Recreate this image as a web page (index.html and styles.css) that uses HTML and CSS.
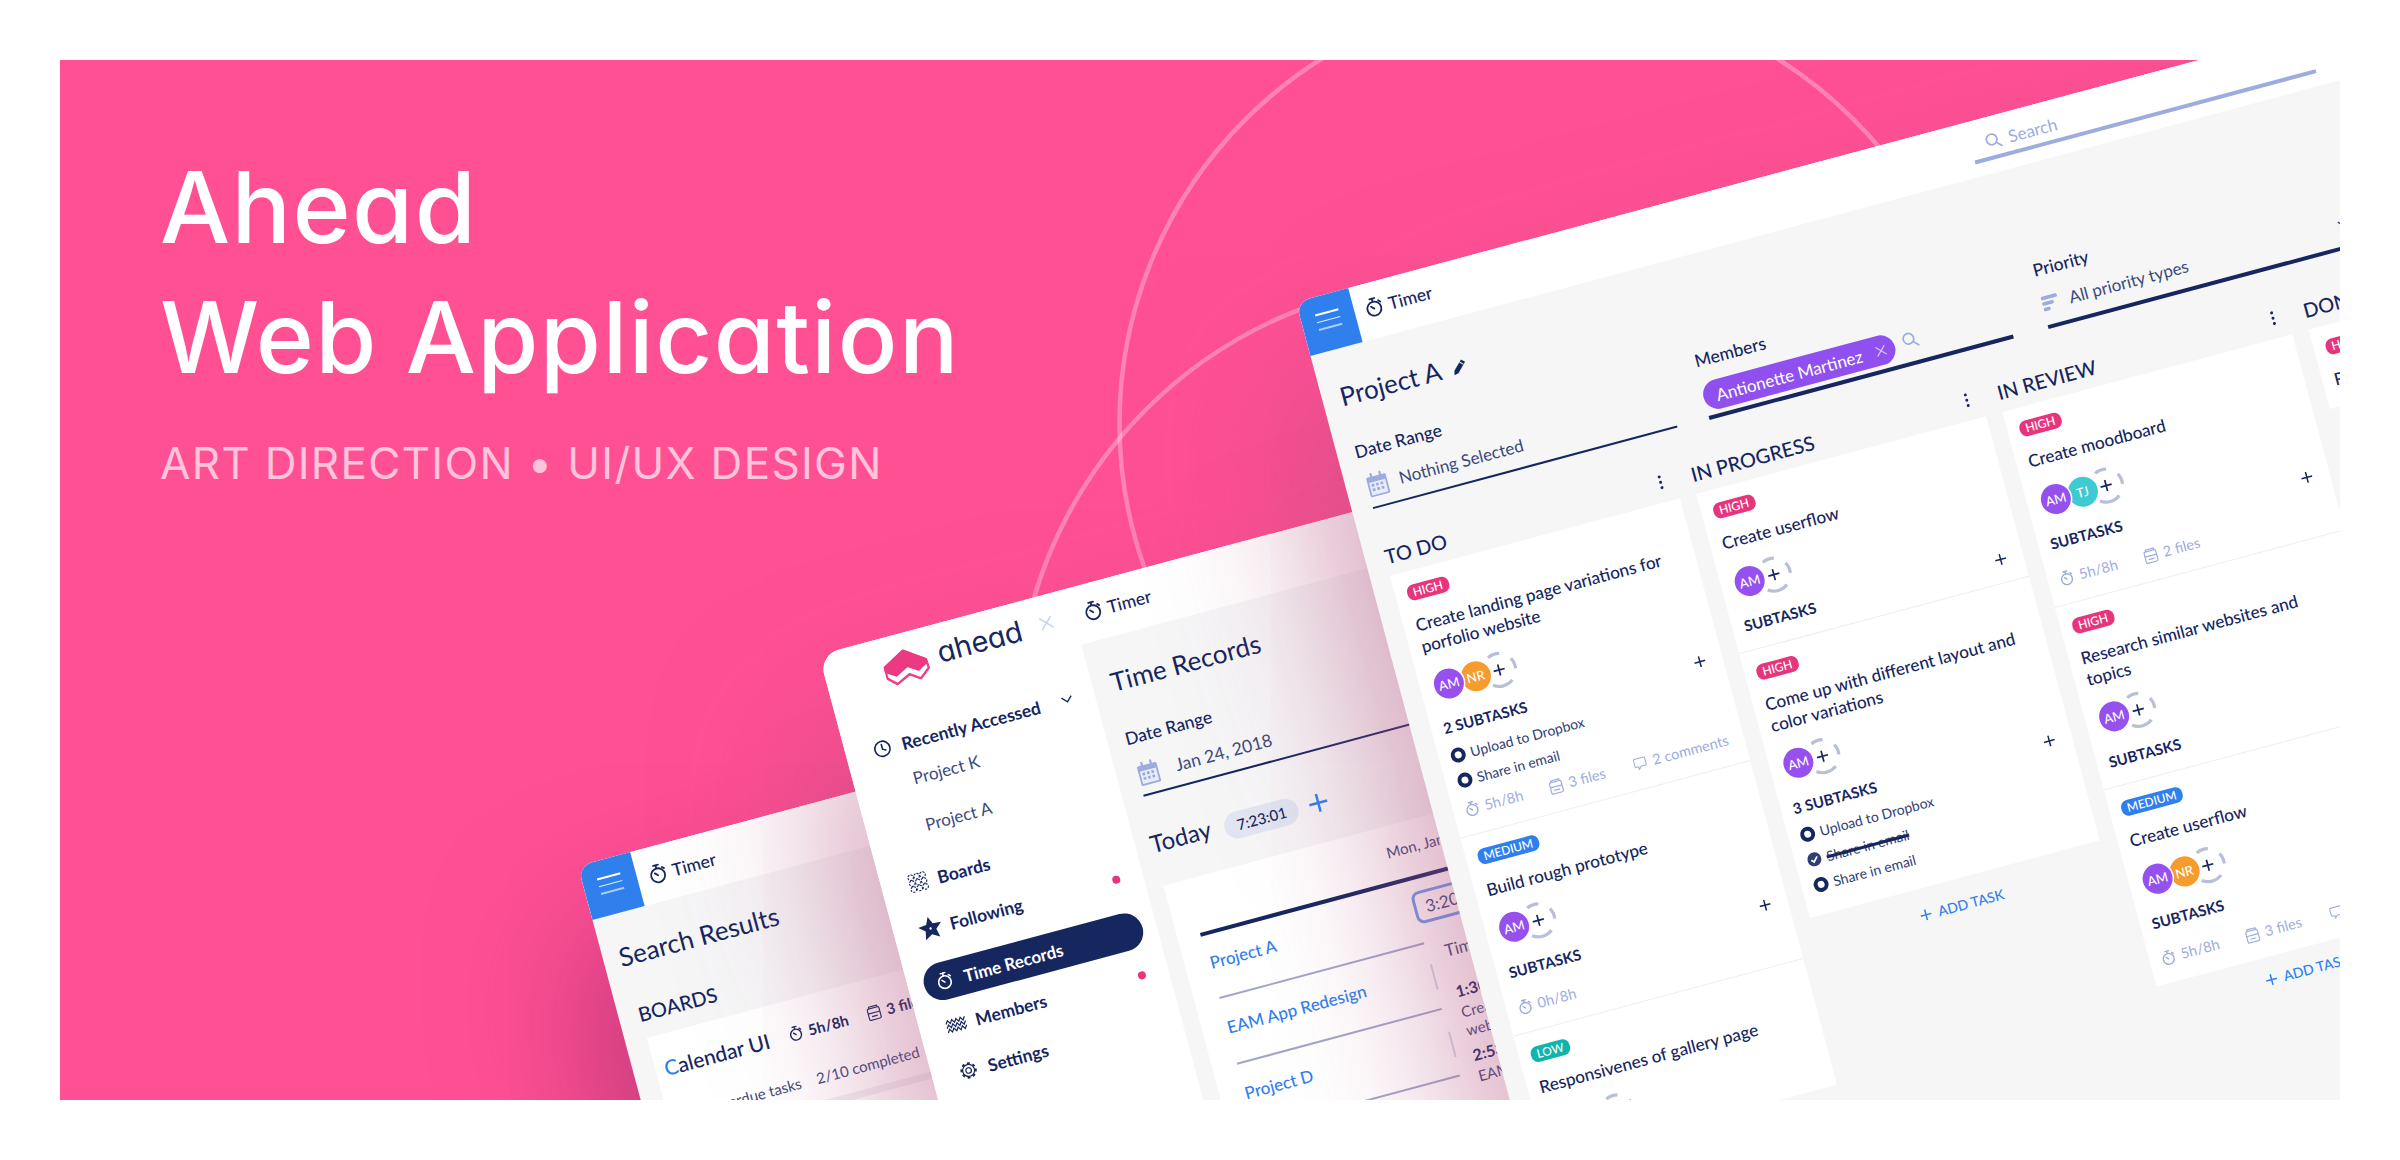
FILE: index.html
```html
<!DOCTYPE html>
<html lang="en">
<head>
<meta charset="utf-8">
<title>Ahead Web Application</title>
<link rel="stylesheet" href="styles.css">
</head>
<body>
<svg class="sprite" width="0" height="0" aria-hidden="true">
  <symbol id="i-timer" viewBox="0 0 18 20"><g fill="none" stroke="currentColor" stroke-width="1.800" stroke-linecap="round"><circle cx="9" cy="11.700" r="7"/><path d="M6.500 1.400h5M9 1.400v3M14.800 4.600l1.700 1.700M9 11.700L6.300 9"/></g></symbol>
  <symbol id="i-search" viewBox="0 0 16 16"><g fill="none" stroke="currentColor" stroke-width="1.6" stroke-linecap="round"><circle cx="6.6" cy="6.6" r="5"/><path d="M10.4 10.4l4.2 4.2"/></g></symbol>
  <symbol id="i-files" viewBox="0 0 14 16"><g fill="none" stroke="currentColor" stroke-width="1.2" stroke-linejoin="round"><path d="M3 3.4V1.6h8.4v1.8"/><rect x="1" y="3.4" width="12" height="11.6" rx="1.4"/><path d="M1 8.2h12M4 11.6h6"/></g></symbol>
  <symbol id="i-comment" viewBox="0 0 16 16"><path d="M2.4 1.6h11.2a1 1 0 0 1 1 1v7.4a1 1 0 0 1-1 1H8.4l-3 3.2V11H2.4a1 1 0 0 1-1-1V2.6a1 1 0 0 1 1-1z" fill="none" stroke="currentColor" stroke-width="1.2" stroke-linejoin="round"/></symbol>
  <symbol id="i-cal" viewBox="0 0 24 26"><path d="M2.5 4h19A1.5 1.5 0 0 1 23 5.5v19a1.5 1.5 0 0 1-1.500 1.500h-19A1.500 1.500 0 0 1 1 24.500v-19A1.500 1.500 0 0 1 2.500 4z" fill="#9dacdf"/><rect x="3" y="10" width="18" height="14" fill="#e9edf9"/><path d="M7 1v6M17 1v6" stroke="#9dacdf" stroke-width="2.4" stroke-linecap="round"/><g fill="#9dacdf"><rect x="5" y="12" width="3" height="3"/><rect x="10" y="12" width="3" height="3"/><rect x="15" y="12" width="3" height="3"/><rect x="5" y="17" width="3" height="3"/><rect x="10" y="17" width="3" height="3"/><rect x="15" y="17" width="3" height="3"/></g></symbol>
  <symbol id="i-filter" viewBox="0 0 18 18"><g stroke="#9dacdf" stroke-width="3.8" stroke-linecap="round"><path d="M2 3h14M2 9h9M2 15h4"/></g></symbol>
  <symbol id="i-pencil" viewBox="0 0 16 16"><path d="M11.500 1.200l3.300 3.300-9.300 9.300-4.300 1 1-4.300z" fill="currentColor"/><path d="M9.400 3.300l3.300 3.300" stroke="#f6f6f7" stroke-width="1"/></symbol>
  <symbol id="i-clock" viewBox="0 0 18 18"><g fill="none" stroke="currentColor" stroke-width="1.600" stroke-linecap="round"><circle cx="9" cy="9" r="7.600"/><path d="M9 4.600V9.400l3 1.600"/></g></symbol>
  <symbol id="i-star" viewBox="0 0 20 20"><path d="M10 .2l2.800 6 7 .7-5.200 4.600 1.500 7L10 15l-6.100 3.500 1.500-7L.2 6.900l7-.7z" fill="currentColor"/><circle cx="10" cy="10" r="1" fill="#fff"/></symbol>
  <symbol id="i-boards" viewBox="0 0 18 18"><g fill="none" stroke="currentColor" stroke-width="1" stroke-dasharray="2 1"><circle cx="3.500" cy="3.500" r="2.500"/><circle cx="9" cy="3.500" r="2.500"/><circle cx="14.500" cy="3.500" r="2.500"/><circle cx="3.500" cy="9" r="2.500"/><circle cx="9" cy="9" r="2.500"/><circle cx="14.500" cy="9" r="2.500"/><circle cx="3.500" cy="14.500" r="2.500"/><circle cx="9" cy="14.500" r="2.500"/><circle cx="14.500" cy="14.500" r="2.500"/></g></symbol>
  <symbol id="i-members" viewBox="0 0 20 14"><g fill="none" stroke="currentColor" stroke-width="1.100"><path d="M1 5l2-3 2 3 2-3 2 3 2-3 2 3 2-3 2 3 2-3"/><path d="M1 9l2-3 2 3 2-3 2 3 2-3 2 3 2-3 2 3 2-3"/><path d="M1 13l2-3 2 3 2-3 2 3 2-3 2 3 2-3 2 3 2-3"/></g></symbol>
  <symbol id="i-gear" viewBox="0 0 18 18"><g fill="none" stroke="currentColor"><circle cx="9" cy="9" r="2.800" stroke-width="1.200"/><circle cx="9" cy="9" r="6" stroke-width="1.200"/><circle cx="9" cy="9" r="7.200" stroke-width="2" stroke-dasharray="2.800 2.850"/></g></symbol>
  <symbol id="i-plus" viewBox="0 0 12 12"><path d="M6 .5v11M.5 6h11" fill="none" stroke="currentColor" stroke-width="1.500"/></symbol>
  <symbol id="i-x" viewBox="0 0 12 12"><path d="M1 1l10 10M11 1L1 11" fill="none" stroke="currentColor" stroke-width="1.200"/></symbol>
  <symbol id="i-chev" viewBox="0 0 12 8"><path d="M1 1.500l5 5 5-5" fill="none" stroke="currentColor" stroke-width="1.400"/></symbol>
  <symbol id="i-dash" viewBox="0 0 38 38"><g fill="none" stroke="#b8bfd6" stroke-width="3.200" stroke-linecap="butt"><path d="M11.500 4.300A16.500 16.500 0 0 1 23.300 3.060"/><path d="M33.300 10.750A16.500 16.500 0 0 1 35.300 21.600"/><path d="M29.200 32A16.500 16.500 0 0 1 9.100 32.200"/></g><path d="M19 13.300v11.400M13.300 19h11.400" stroke="#16265f" stroke-width="1.700"/></symbol>
  <symbol id="i-check" viewBox="0 0 16 16"><circle cx="8" cy="8" r="7.500" fill="currentColor"/><path d="M4.500 8.200l2.500 2.500 4.500-5" fill="none" stroke="#fff" stroke-width="1.800"/></symbol>
</svg>

<main class="stage">
  <svg class="rings" viewBox="0 0 2280 1040" aria-hidden="true">
    <circle cx="1489.500" cy="363.500" r="430"/>
    <circle cx="1399" cy="663" r="443"/>
  </svg>

  <header class="intro">
    <h1 class="headline">Ahead<br>Web Application</h1>
    <p class="subline">ART DIRECTION • UI/UX DESIGN</p>
  </header>

  <!-- Search Results window -->
  <section class="win win-search">
    <div class="topbar">
      <div class="burger"><i></i><i></i><i></i></div>
      <div class="timer"><svg class="ic-timer"><use href="#i-timer"/></svg>Timer</div>
    </div>
    <div class="search-body">
      <h2 class="page-title">Search Results</h2>
      <h3 class="section-title">BOARDS</h3>
      <div class="board-card">
        <div class="bc-top">
          <span class="bc-name"><b>C</b>alendar UI</span>
          <span class="bc-meta"><svg class="ic-sm"><use href="#i-timer"/></svg>5h/8h</span>
          <span class="bc-meta"><svg class="ic-sm"><use href="#i-files"/></svg>3 files</span>
        </div>
        <div class="bc-stats"><span>0 overdue tasks</span><span>2/10 completed</span></div>
        <div class="bc-bar"></div>
      </div>
    </div>
  </section>

  <!-- Time Records window -->
  <section class="win win-time">
    <aside class="side">
      <div class="logo-row">
        <svg class="logo" viewBox="0 0 45 34" aria-hidden="true">
          <path d="M1 13.500L23 1.500l20 14 1 9-10.500 8.500-10-7-14 6.500L1 24.500z" fill="#fff" stroke="#ee3f85" stroke-width="2.400" stroke-linejoin="round"/>
          <path d="M1 13.500L23 1.500l20 14 .5 3-10 5.500-10-6.500-13 6.500L1 18z" fill="#ec3a82" stroke="#ec3a82" stroke-width="2" stroke-linejoin="round"/>
        </svg>
        <span class="logo-word">ahead</span>
        <svg class="logo-x"><use href="#i-x"/></svg>
      </div>
      <nav class="nav">
        <div class="nav-head"><svg class="ic-nav"><use href="#i-clock"/></svg><span>Recently Accessed</span><svg class="chev"><use href="#i-chev"/></svg></div>
        <div class="nav-sub">Project K</div>
        <div class="nav-sub">Project A</div>
        <div class="nav-item nav-boards"><svg class="ic-nav ic-wide"><use href="#i-boards"/></svg>Boards</div>
        <div class="nav-item"><svg class="ic-nav ic-star"><use href="#i-star"/></svg>Following<span class="dot"></span></div>
        <div class="nav-pill"><svg class="ic-nav"><use href="#i-timer"/></svg>Time Records</div>
        <div class="nav-item nav-members"><svg class="ic-nav ic-wide"><use href="#i-members"/></svg>Members<span class="dot"></span></div>
        <div class="nav-item"><svg class="ic-nav"><use href="#i-gear"/></svg>Settings</div>
      </nav>
    </aside>
    <div class="time-main">
      <div class="time-top"><div class="timer"><svg class="ic-timer"><use href="#i-timer"/></svg>Timer</div></div>
      <div class="time-body">
        <h2 class="page-title tr-title">Time Records</h2>
        <div class="tr-field">
          <div class="field-label">Date Range</div>
          <div class="tr-date"><svg class="ic-cal"><use href="#i-cal"/></svg>Jan 24, 2018</div>
        </div>
        <div class="today-row">
          <span class="today">Today</span>
          <span class="today-pill">7:23:01</span>
          <svg class="today-add"><use href="#i-plus"/></svg>
        </div>
        <div class="tr-card">
          <div class="tr-date-head">Mon, Jan 24</div>
          <div class="tr-rule"></div>
          <div class="tr-grid">
            <div class="tr-projects">
              <div class="tr-row">Project A</div>
              <div class="tr-row">EAM App Redesign</div>
              <div class="tr-row">Project D</div>
            </div>
            <div class="tr-detail">
              <div class="tr-box">3:20:01</div>
              <div class="tr-lbl">Time</div>
              <div class="tr-num">1:30:00</div>
              <div class="tr-txt">Create landing<br>website</div>
              <div class="tr-num">2:53:01</div>
              <div class="tr-txt">EAM App</div>
              <span class="vsep vsep-a"></span>
              <span class="vsep vsep-b"></span>
            </div>
          </div>
        </div>
      </div>
    </div>
  </section>

  <!-- Project board window -->
  <section class="win win-board">
    <div class="topbar">
      <div class="burger"><i></i><i></i><i></i></div>
      <div class="timer timer-up"><svg class="ic-timer"><use href="#i-timer"/></svg>Timer</div>
      <div class="searchbox"><svg class="ic-search"><use href="#i-search"/></svg>Search</div>
    </div>
    <div class="filters">
      <h2 class="page-title project">Project A<svg class="ic-pencil"><use href="#i-pencil"/></svg></h2>
      <div class="fields">
        <div class="field">
          <div class="field-label">Date Range</div>
          <div class="field-row thin"><svg class="ic-cal"><use href="#i-cal"/></svg>Nothing Selected</div>
        </div>
        <div class="field field-members">
          <div class="field-label">Members</div>
          <div class="field-row thick chip-row">
            <span class="chip">Antionette Martinez<svg class="chip-x"><use href="#i-x"/></svg></span>
            <svg class="ic-search"><use href="#i-search"/></svg>
          </div>
        </div>
        <div class="field field-priority">
          <div class="field-label">Priority</div>
          <div class="field-row thick"><svg class="ic-filter"><use href="#i-filter"/></svg>All priority types<svg class="chev chev-end"><use href="#i-chev"/></svg></div>
        </div>
      </div>
    </div>

    <div class="board">
      <div class="col">
        <div class="col-head"><span>TO DO</span><i class="dots"></i></div>
        <article class="card">
          <span class="tag high">HIGH</span>
          <h4 class="card-title">Create landing page variations for porfolio website</h4>
          <div class="people">
            <span class="av am">AM</span><span class="av nr">NR</span><svg class="dash"><use href="#i-dash"/></svg>
            <svg class="row-add"><use href="#i-plus"/></svg>
          </div>
          <div class="sub-label">2 SUBTASKS</div>
          <ul class="subs">
            <li><i class="ring"></i>Upload to Dropbox</li>
            <li><i class="ring"></i>Share in email</li>
          </ul>
          <div class="foot foot-tight">
            <span><svg class="ic-sm"><use href="#i-timer"/></svg>5h/8h</span>
            <span><svg class="ic-sm"><use href="#i-files"/></svg>3 files</span>
            <span><svg class="ic-sm"><use href="#i-comment"/></svg>2 comments</span>
          </div>
        </article>
        <article class="card">
          <span class="tag medium">MEDIUM</span>
          <h4 class="card-title">Build rough prototype</h4>
          <div class="people">
            <span class="av am">AM</span><svg class="dash"><use href="#i-dash"/></svg>
            <svg class="row-add"><use href="#i-plus"/></svg>
          </div>
          <div class="sub-label">SUBTASKS</div>
          <div class="foot">
            <span><svg class="ic-sm"><use href="#i-timer"/></svg>0h/8h</span>
          </div>
        </article>
        <article class="card">
          <span class="tag low">LOW</span>
          <h4 class="card-title">Responsivenes of gallery page</h4>
          <div class="people">
            <span class="av am">AM</span><span class="av tj">TJ</span><svg class="dash"><use href="#i-dash"/></svg>
          </div>
        </article>
      </div>

      <div class="col">
        <div class="col-head"><span>IN PROGRESS</span><i class="dots"></i></div>
        <article class="card">
          <span class="tag high">HIGH</span>
          <h4 class="card-title">Create userflow</h4>
          <div class="people">
            <span class="av am">AM</span><svg class="dash"><use href="#i-dash"/></svg>
            <svg class="row-add"><use href="#i-plus"/></svg>
          </div>
          <div class="sub-label">SUBTASKS</div>
        </article>
        <article class="card">
          <span class="tag high">HIGH</span>
          <h4 class="card-title">Come up with different layout and color variations</h4>
          <div class="people">
            <span class="av am">AM</span><svg class="dash"><use href="#i-dash"/></svg>
            <svg class="row-add"><use href="#i-plus"/></svg>
          </div>
          <div class="sub-label">3 SUBTASKS</div>
          <ul class="subs">
            <li><i class="ring"></i>Upload to Dropbox</li>
            <li><svg class="tick"><use href="#i-check"/></svg><s>Share in email</s></li>
            <li><i class="ring"></i>Share in email</li>
          </ul>
        </article>
        <div class="add-task"><svg class="add-ic"><use href="#i-plus"/></svg>ADD TASK</div>
      </div>

      <div class="col">
        <div class="col-head"><span>IN REVIEW</span><i class="dots"></i></div>
        <article class="card">
          <span class="tag high">HIGH</span>
          <h4 class="card-title">Create moodboard</h4>
          <div class="people">
            <span class="av am">AM</span><span class="av tj">TJ</span><svg class="dash"><use href="#i-dash"/></svg>
            <svg class="row-add"><use href="#i-plus"/></svg>
          </div>
          <div class="sub-label">SUBTASKS</div>
          <div class="foot">
            <span><svg class="ic-sm"><use href="#i-timer"/></svg>5h/8h</span>
            <span><svg class="ic-sm"><use href="#i-files"/></svg>2 files</span>
          </div>
        </article>
        <article class="card">
          <span class="tag high">HIGH</span>
          <h4 class="card-title">Research similar websites and topics</h4>
          <div class="people">
            <span class="av am">AM</span><svg class="dash"><use href="#i-dash"/></svg>
          </div>
          <div class="sub-label">SUBTASKS</div>
        </article>
        <article class="card">
          <span class="tag medium">MEDIUM</span>
          <h4 class="card-title">Create userflow</h4>
          <div class="people">
            <span class="av am">AM</span><span class="av nr">NR</span><svg class="dash"><use href="#i-dash"/></svg>
          </div>
          <div class="sub-label">SUBTASKS</div>
          <div class="foot">
            <span><svg class="ic-sm"><use href="#i-timer"/></svg>5h/8h</span>
            <span><svg class="ic-sm"><use href="#i-files"/></svg>3 files</span>
            <span><svg class="ic-sm"><use href="#i-comment"/></svg>2 comments</span>
          </div>
        </article>
        <div class="add-task add-task-near"><svg class="add-ic"><use href="#i-plus"/></svg>ADD TASK</div>
      </div>

      <div class="col">
        <div class="col-head"><span>DONE</span></div>
        <article class="card">
          <span class="tag high">HIGH</span>
          <h4 class="card-title">Research competitors</h4>
        </article>
      </div>
    </div>
  </section>
</main>
</body>
</html>
```

FILE: styles.css
```css
* { box-sizing: border-box; }
html, body { margin: 0; padding: 0; }
body {
  width: 2400px;
  height: 1160px;
  background: #fff;
  overflow: hidden;
  font-family: "Lato", "Liberation Sans", sans-serif;
  color: #16265f;
}
.sprite { position: absolute; }
svg { display: block; flex: none; }
h1, h2, h3, h4, p, ul { margin: 0; padding: 0; font-weight: inherit; font-size: inherit; }
ul { list-style: none; }

.stage {
  position: relative;
  width: 2280px;
  height: 1040px;
  margin: 60px;
  background: #ff5094;
  overflow: hidden;
}
.rings { position: absolute; inset: 0; width: 2280px; height: 1040px; }
.rings circle { fill: none; stroke: rgba(255, 255, 255, .3); stroke-width: 4.5; }

.intro { padding: 82px 0 0 100px; color: #fff; font-family: "Inter", "Liberation Sans", sans-serif; font-feature-settings: "cv11" 1; }
.headline { font-size: 99px; line-height: 130px; font-weight: 450; letter-spacing: 1.400px; }
.subline { margin-top: 34px; font-size: 44px; line-height: 54px; color: #ffc4dc; font-weight: 400; letter-spacing: 1.300px; }

/* free-canvas windows */
.win { position: absolute; transform-origin: 0 0; transform: rotate(-15deg); background: #f6f6f7; }
.win-search {
  left: 517.500px; top: 806px; width: 640px; height: 500px;
  border-top-left-radius: 14px;
  box-shadow: -30px 80px 140px rgba(140, 40, 100, .55);
}
.win-time {
  left: 759px; top: 595px; width: 900px; height: 900px;
  border-radius: 20px 0 0 0;
  display: grid;
  grid-template-columns: 256px 1fr;
  box-shadow: -40px 90px 150px rgba(180, 80, 125, .5);
}
.win-board {
  left: 1236px; top: 242px; width: 1200px; height: 1300px;
  border-top-left-radius: 14px;
  box-shadow: -40px 90px 150px rgba(180, 80, 125, .5);
}

.topbar { display: flex; align-items: center; height: 56px; background: #fff; border-top-left-radius: 14px; }
.burger {
  width: 54px; height: 56px; background: #2f80ed; border-top-left-radius: 14px;
  display: flex; flex-direction: column; justify-content: center; align-items: center; gap: 6px; padding-bottom: 5px;
}
.burger i { display: block; width: 24px; height: 1.600px; background: #fff; }
.burger i:nth-child(2) { opacity: .85; }
.burger i:nth-child(3) { opacity: .6; }
.timer { display: flex; align-items: center; gap: 6px; margin-left: 11px; font-size: 17.500px; font-weight: 500; }
.timer-up { padding-bottom: 6px; }
.ic-timer { width: 18px; height: 20px; }
.ic-sm { width: 14px; height: 16px; }
.searchbox {
  display: flex; align-items: center; gap: 7px;
  align-self: flex-start;
  margin-left: auto; margin-right: 155px;
  width: 353px; height: 43px; padding: 9px 0 0 15px;
  border-bottom: 4.500px solid #9dacdf;
  color: #9dacdf; font-size: 17px;
}
.ic-search { width: 17px; height: 17px; }

.page-title { font-size: 26px; line-height: 32px; font-weight: 400; }
.filters { padding: 31px 0 0 21px; }
.project { display: flex; align-items: center; gap: 11px; margin-left: -3px; }
.ic-pencil { width: 16px; height: 18px; margin-top: 4px; color: #16265f; }
.fields { display: flex; gap: 33px; margin-top: 31.500px; }
.field { width: 315px; }
.field-priority { margin-left: 3px; }
.field-label { font-size: 17.500px; line-height: 20px; font-weight: 500; margin-left: -3px; }
.field-members .field-label { margin-left: 1px; }
.field-priority .field-label { margin-left: 0; }
.field-row {
  display: flex; align-items: center; gap: 11px;
  height: 50px; padding-top: 4px; font-size: 17px; color: #3c4a7c;
}
.thin { height: 49.500px; border-bottom: 2px solid #16265f; }
.thick { height: 50px; border-bottom: 4px solid #16265f; }
.ic-cal { width: 22px; height: 25px; }
.ic-filter { width: 17px; height: 17px; }
.chip-row { padding-top: 9px; }
.chip {
  display: flex; align-items: center; justify-content: space-between;
  width: 198px; height: 30px; padding: 0 9px 0 13px;
  border-radius: 15px; background: #8f50ef; color: #fff; font-size: 17px;
}
.chip-x { width: 11px; height: 11px; color: #dcc9fb; }
.chip-row .ic-search { margin-left: -3px; margin-top: -6px; color: #9dacdf; }
.chev { width: 12px; height: 8px; }
.chev-end { margin-left: auto; margin-right: -3px; margin-top: -2px; }

.board { display: flex; gap: 17px; padding-left: 20px; margin-top: 36.500px; }
.col { width: 300px; flex: none; }
.col-head {
  display: flex; justify-content: space-between; align-items: center;
  height: 24px; margin: 0 0 7.500px 0; padding-right: 13px;
  font-size: 20px; line-height: 24px; font-weight: 500;
}
.dots { display: block; width: 3px; height: 3px; border-radius: 50%; background: #16265f; box-shadow: 0 -5.500px #16265f, 0 5.500px #16265f; margin-top: -1px; }

.card { display: block; background: #fff; padding: 14px 12px 16px; }
.card + .card { padding-top: 15px; border-top: 1px solid #efeff2; }
.tag {
  display: block; width: fit-content; height: 16px; padding: 0 6px;
  border-radius: 7px; color: #fff; font-size: 12px; line-height: 16px; font-weight: 500;
}
.high { background: #e8347c; }
.medium { background: #2f80ed; }
.low { background: #0db5ad; }
.card-title { margin-top: 14.500px; padding-right: 4px; font-size: 17.200px; line-height: 21.500px; font-weight: 500; }
.people { position: relative; display: flex; align-items: center; height: 30px; margin: 17px 0 0 2px; }
.av {
  position: relative; display: flex; align-items: center; justify-content: center;
  width: 30px; height: 30px; border-radius: 50%;
  color: #fff; font-size: 13px; font-weight: 500;
}
.av + .av { margin-left: -2.500px; }
.am { background: #9650ee; z-index: 2; box-shadow: 0 0 0 1.500px #fff; }
.nr { background: #f69b2d; z-index: 1; }
.tj { background: #3dcad2; z-index: 1; }
.dash { width: 38px; height: 38px; margin-left: -9.500px; }
.row-add { position: absolute; top: 53px; right: 5px; width: 12px; height: 12px; }
.sub-label { margin-top: 18.400px; font-size: 15px; line-height: 18px; font-weight: 700; }
.subs { margin-top: 7px; font-size: 14px; color: #2f3e75; }
.subs li { display: flex; align-items: center; gap: 5px; height: 26px; }
.ring { display: block; width: 15px; height: 15px; border-radius: 50%; border: 4.200px solid #16265f; background: #fff; flex: none; }
.tick { width: 15px; height: 15px; }
.subs s { text-decoration-thickness: 2.500px; text-decoration-color: #16265f; }
.foot {
  display: grid; grid-template-columns: 87px 87px auto; margin-top: 19px;
  height: 18px; font-size: 14.500px; line-height: 18px; color: #9dacdf; white-space: nowrap;
}
.foot-tight { margin-top: 8px; }
.foot span { display: flex; align-items: center; gap: 6px; }
.add-task {
  display: flex; align-items: center; justify-content: center; gap: 7px;
  margin-top: 17px; color: #2f80ed; font-size: 14px; line-height: 20px; font-weight: 500;
}
.add-task-near { margin-top: 13px; }
.add-ic { width: 12px; height: 12px; }

/* Search Results */
.win-search .timer { margin-left: 12px; }
.search-body { padding: 27px 0 0 16px; }
.section-title { margin: 32px 0 0 4px; font-size: 20px; line-height: 24px; font-weight: 500; }
.board-card { width: 560px; margin: 13px 0 0 6px; padding: 21px 0 0 9px; height: 260px; background: #fff; }
.bc-top { display: flex; align-items: baseline; }
.bc-name { font-size: 21px; line-height: 25px; font-weight: 500; width: 127px; }
.bc-name b { color: #2f80ed; font-weight: 500; }
.bc-meta { display: flex; align-items: center; gap: 6px; width: 79px; font-size: 15px; font-weight: 700; margin-left: 2px; }
.bc-stats { display: flex; gap: 16px; margin: 28px 0 0 25px; font-size: 15px; line-height: 18px; color: #3c4a7c; }
.bc-bar { height: 7px; width: 500px; margin-top: 14px; background: #f0f0f3; }

/* Time Records */
.side { background: #fff; border-radius: 20px 0 0 0; }
.logo-row { display: flex; align-items: center; height: 58px; padding: 8px 21px 0 59px; }
.logo { width: 45px; height: 34px; margin-right: 11px; }
.logo-word { font-family: "Inter", "Liberation Sans", sans-serif; font-feature-settings: "cv11" 1; font-size: 29px; line-height: 36px; font-weight: 400; padding-bottom: 8px; }
.logo-x { width: 14px; height: 14px; margin-left: auto; margin-top: -10px; color: #c5cfee; }
.nav { margin: 37px 0 0 19px; width: 223px; }
.nav-head { display: flex; align-items: center; gap: 11px; height: 24px; padding: 0 8px 0 9px; font-size: 17.500px; font-weight: 700; }
.nav-head .chev { margin-left: auto; }
.ic-nav { width: 18px; height: 18px; }
.ic-wide { width: 22px; height: 20px; margin: 0 -2px; }
.ic-star { width: 24px; height: 24px; margin: 0 -3px; }
.nav-sub { height: 48px; padding-left: 40px; font-size: 17px; line-height: 48px; color: #3c4a7c; }
.nav-sub:nth-child(2) { margin-top: .500px; }
.nav-item { position: relative; display: flex; align-items: center; gap: 11px; height: 48px; padding-left: 9px; font-size: 17.400px; font-weight: 700; }
.nav-boards { margin-top: 5.500px; }
.nav-members { margin-top: 2px; }
.dot { position: absolute; top: 21px; right: 9px; width: 8px; height: 8px; border-radius: 50%; background: #e8347c; }
.nav-pill {
  display: flex; align-items: center; gap: 11px; height: 38px; margin: 11px 0 0 -3px; padding-left: 12px;
  border-radius: 19px; background: #16265f; color: #fff; font-size: 17px; font-weight: 700;
}
.time-top { height: 58px; background: #fff; display: flex; align-items: center; padding-bottom: 2px; }
.tr-title { margin-left: 2px; }
.time-body { padding: 28px 0 0 17px; }
.tr-field { margin: 33px 0 0 4px; width: 310px; }
.tr-date {
  display: flex; align-items: center; gap: 17px; height: 50px; padding-top: 7px;
  font-size: 17.500px; color: #3c4a7c; border-bottom: 2px solid #16265f;
}
.today-row { display: flex; align-items: center; gap: 14px; height: 46px; margin: 28px 0 0 -2px; }
.today { font-size: 24px; line-height: 30px; padding-bottom: 7px; }
.today-pill {
  display: flex; align-items: center; justify-content: center;
  width: 76px; height: 27px; border-radius: 14px; background: #e1e5f2;
  font-size: 15px; font-weight: 500;
}
.today-add { width: 20px; height: 20px; margin-left: -3px; color: #2f80ed; }
.tr-card { width: 620px; height: 500px; margin-top: 17px; padding: 17px 0 0 23px; background: #fff; }
.tr-date-head { margin-left: 201px; font-size: 15px; line-height: 18px; color: #3c4a7c; }
.tr-rule { height: 4px; margin-top: 20px; background: #16265f; }
.tr-grid { display: flex; }
.tr-projects { width: 212px; margin-left: 2px; }
.tr-row {
  height: 68.500px; padding-top: 20px; font-size: 17px; line-height: 20px; font-weight: 500;
  color: #2f80ed; border-bottom: 2px solid #a3a6c8;
}
.tr-row:first-child { height: 64.500px; padding-top: 18px; }
.tr-detail { position: relative; width: 300px; }
.tr-box {
  width: 110px; height: 33px; margin: 12px 0 0 -1px; padding: 5px 9px;
  border: 3px solid #6e9dee; border-radius: 8px; font-size: 17px; line-height: 18px; color: #3c4a7c;
}
.tr-lbl { margin: 22px 0 0 18px; font-size: 17px; line-height: 20px; color: #3c4a7c; }
.tr-num { margin: 22px 0 0 18px; font-size: 16px; line-height: 20px; font-weight: 700; }
.tr-txt { margin: 2px 0 0 18px; font-size: 15px; line-height: 19px; color: #3c4a7c; }
.tr-txt + .tr-num { margin-top: 6px; }
.vsep { position: absolute; left: 0; width: 1.500px; height: 26px; background: #d5d7e6; }
.vsep-a { top: 86px; }
.vsep-b { top: 156px; }
```
